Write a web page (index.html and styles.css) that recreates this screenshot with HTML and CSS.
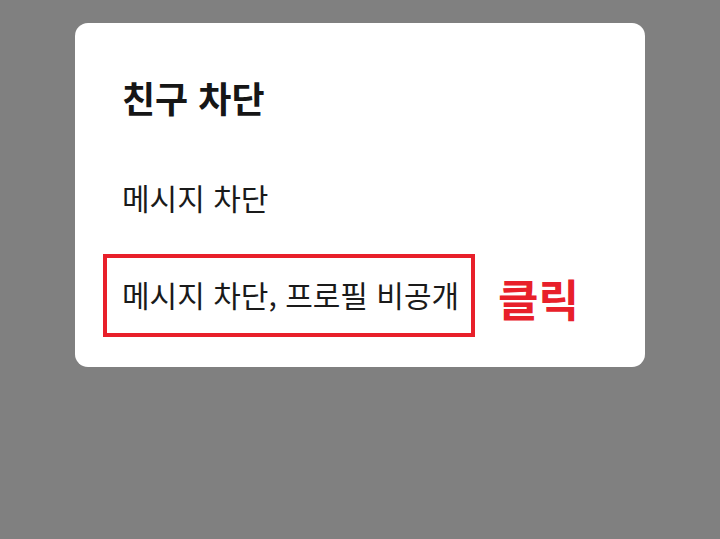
FILE: index.html
```html
<!DOCTYPE html>
<html lang="ko">
<head>
<meta charset="utf-8">
<title>친구 차단</title>
<link rel="stylesheet" href="styles.css">
</head>
<body>
<div class="screen">
  <div class="dialog">
    <h1 class="dialog-title">친구 차단</h1>
    <div class="option">메시지 차단</div>
    <div class="option-row">
      <div class="option option-marked">메시지 차단, 프로필 비공개</div>
      <span class="click-note">클릭</span>
    </div>
  </div>
</div>
</body>
</html>
```

FILE: styles.css
```css
html, body {
  margin: 0;
  padding: 0;
}

body {
  width: 720px;
  height: 539px;
  background: #808080;
  font-family: "Noto Sans CJK KR", "Noto Sans", sans-serif;
  color: #111;
  overflow: hidden;
}

.screen {
  padding: 23px 0 0 75px;
}

.dialog {
  width: 570px;
  height: 344px;
  box-sizing: border-box;
  background: #fff;
  border-radius: 13px;
  padding: 52px 0 0 47px;
}

.dialog-title {
  margin: 0;
  font-size: 36px;
  font-weight: 700;
  line-height: 44px;
  color: #161616;
}

.option {
  font-size: 30px;
  line-height: 40px;
  margin-top: 58px;
  color: #1a1a1a;
  white-space: nowrap;
}

.option-row {
  display: flex;
  align-items: center;
  margin-top: 37px;
  margin-left: -19px;
}

.option-row .option {
  margin-top: 0;
}

.option-marked {
  box-sizing: border-box;
  width: 372px;
  border: 4px solid #e8202a;
  padding: 16px 8px 19px 15px;
}

.click-note {
  margin: 4px 0 0 23px;
  font-size: 44px;
  font-weight: 700;
  color: #e8202a;
  line-height: 52px;
}
```
